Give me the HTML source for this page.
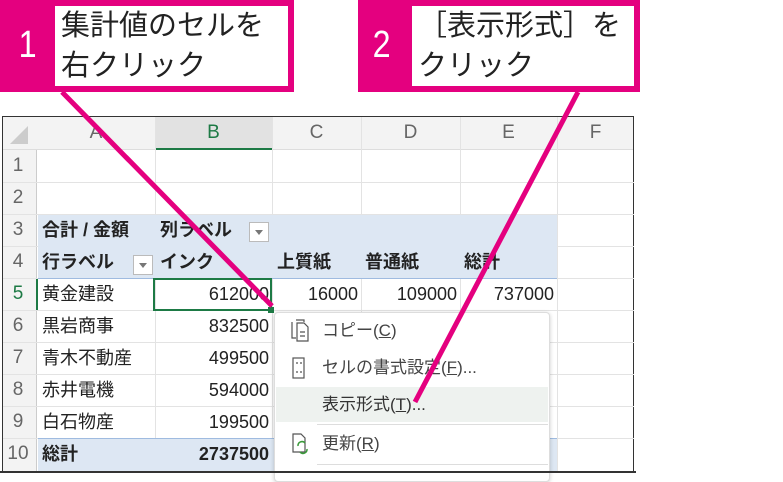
<!DOCTYPE html>
<html><head><meta charset="utf-8"><style>
*{margin:0;padding:0;box-sizing:border-box}
body{width:783px;height:473px;background:#fff;position:relative;overflow:hidden;font-family:"Liberation Sans","Noto Sans CJK JP",sans-serif;color:#222}
.a{position:absolute}
.call{background:#e4007f}
.in{background:#fff;font-size:29px;line-height:40px;padding:0 0 0 6px;color:#222;white-space:nowrap;overflow:hidden}
.num{color:#fff;font-size:38px;font-family:"Liberation Sans",sans-serif;transform:scaleX(.85)}
.t{position:absolute;font-size:18px;line-height:32px;white-space:nowrap}
.hd{color:#666;text-align:center;font-size:19px}
.r{text-align:right}
.b{font-weight:bold}
</style></head><body>
<!-- callouts -->
<div class="a call" style="left:0;top:0;width:294px;height:92px"></div>
<div class="a in" style="left:55px;top:6px;width:233px;height:80px">集計値のセルを<br>右クリック</div>
<div class="a num" style="left:17px;top:24px">1</div>
<div class="a call" style="left:358px;top:0;width:282px;height:92px"></div>
<div class="a in" style="left:412px;top:6px;width:222px;height:80px">［表示形式］を<br>クリック</div>
<div class="a num" style="left:371px;top:24px">2</div>

<!-- sheet frame -->
<div class="a" style="left:2px;top:116px;width:632px;height:357px;border:1px solid #333;border-bottom:none;background:#fff"></div>
<div class="a" style="left:3px;top:117px;width:630px;height:33px;background:#f3f3f3;border-bottom:1px solid #ddd"></div>
<div class="a" style="left:155px;top:117px;width:117px;height:33px;background:#e2e2e2;border-bottom:2px solid #1d7a45"></div>
<div class="a" style="left:3px;top:150px;width:34px;height:323px;background:#f3f3f3;border-right:1px solid #ccc"></div>
<svg class="a" style="left:0;top:0" width="783" height="473">
<polygon points="28,144 28,126 10,144" fill="#ccc"/>
<g stroke="#e3e3e3" stroke-width="1">
<line x1="155.5" y1="117" x2="155.5" y2="473"/><line x1="272.5" y1="117" x2="272.5" y2="473"/>
<line x1="361.5" y1="117" x2="361.5" y2="473"/><line x1="460.5" y1="117" x2="460.5" y2="473"/>
<line x1="557.5" y1="117" x2="557.5" y2="473"/>
<line x1="3" y1="182.5" x2="634" y2="182.5"/><line x1="3" y1="214.5" x2="634" y2="214.5"/>
<line x1="3" y1="246.5" x2="634" y2="246.5"/><line x1="3" y1="278.5" x2="634" y2="278.5"/>
<line x1="3" y1="310.5" x2="634" y2="310.5"/><line x1="3" y1="342.5" x2="634" y2="342.5"/>
<line x1="3" y1="374.5" x2="634" y2="374.5"/><line x1="3" y1="406.5" x2="634" y2="406.5"/>
<line x1="3" y1="438.5" x2="634" y2="438.5"/>
</g>
<rect x="38" y="215" width="519" height="63" fill="#dde7f3"/>
<line x1="38" y1="278.5" x2="557" y2="278.5" stroke="#9fbbe0"/>
<rect x="38" y="439" width="519" height="34" fill="#dde7f3"/>
<line x1="38" y1="438.5" x2="557" y2="438.5" stroke="#9fbbe0"/>
<rect x="249.5" y="222.5" width="19" height="19" fill="#fff" stroke="#bbb"/>
<polygon points="255,230 263,230 259,235" fill="#777"/>
<rect x="133.5" y="255.5" width="19" height="19" fill="#fff" stroke="#bbb"/>
<polygon points="139,263 147,263 143,268" fill="#777"/>
<rect x="154" y="279" width="117" height="31" fill="none" stroke="#1d7a45" stroke-width="2"/>
<line x1="37" y1="279" x2="37" y2="310" stroke="#1d7a45" stroke-width="2"/>
<rect x="268" y="307" width="6" height="6" fill="#1d7a45"/>
</svg>
<!-- col headers -->
<div class="t hd" style="left:37px;top:117px;width:118px">A</div>
<div class="t hd" style="left:155px;top:117px;width:117px;color:#1d7a45">B</div>
<div class="t hd" style="left:272px;top:117px;width:89px">C</div>
<div class="t hd" style="left:361px;top:117px;width:99px">D</div>
<div class="t hd" style="left:460px;top:117px;width:97px">E</div>
<div class="t hd" style="left:557px;top:117px;width:77px">F</div>
<!-- row numbers -->
<div class="t hd" style="left:3px;top:150px;width:30px">1</div>
<div class="t hd" style="left:3px;top:182px;width:30px">2</div>
<div class="t hd" style="left:3px;top:214px;width:30px">3</div>
<div class="t hd" style="left:3px;top:246px;width:30px">4</div>
<div class="t hd" style="left:3px;top:278px;width:30px;color:#1d7a45">5</div>
<div class="t hd" style="left:3px;top:310px;width:30px">6</div>
<div class="t hd" style="left:3px;top:342px;width:30px">7</div>
<div class="t hd" style="left:3px;top:374px;width:30px">8</div>
<div class="t hd" style="left:3px;top:406px;width:30px">9</div>
<div class="t hd" style="left:3px;top:438px;width:30px">10</div>
<!-- cells -->
<div class="t b" style="left:42px;top:214px">合計 / 金額</div>
<div class="t b" style="left:160px;top:214px">列ラベル</div>
<div class="t b" style="left:42px;top:246px">行ラベル</div>
<div class="t b" style="left:160px;top:246px">インク</div>
<div class="t b" style="left:277px;top:246px">上質紙</div>
<div class="t b" style="left:365px;top:246px">普通紙</div>
<div class="t b" style="left:464px;top:246px">総計</div>
<div class="t" style="left:42px;top:278px">黄金建設</div>
<div class="t" style="left:42px;top:310px">黒岩商事</div>
<div class="t" style="left:42px;top:342px">青木不動産</div>
<div class="t" style="left:42px;top:374px">赤井電機</div>
<div class="t" style="left:42px;top:406px">白石物産</div>
<div class="t b" style="left:42px;top:438px">総計</div>
<div class="t r" style="left:155px;top:278px;width:114px">612000</div>
<div class="t r" style="left:155px;top:310px;width:114px">832500</div>
<div class="t r" style="left:155px;top:342px;width:114px">499500</div>
<div class="t r" style="left:155px;top:374px;width:114px">594000</div>
<div class="t r" style="left:155px;top:406px;width:114px">199500</div>
<div class="t r b" style="left:155px;top:438px;width:114px">2737500</div>
<div class="t r" style="left:272px;top:278px;width:86px">16000</div>
<div class="t r" style="left:361px;top:278px;width:96px">109000</div>
<div class="t r" style="left:460px;top:278px;width:94px">737000</div>
<!-- context menu -->
<div class="a" style="left:274px;top:312px;width:276px;height:170px;background:#fff;border:1px solid #ddd;border-radius:4px;box-shadow:0 1px 4px rgba(0,0,0,.2)"></div>
<div class="a" style="left:276px;top:387px;width:272px;height:35px;background:#eef2ef"></div>
<div class="a" style="left:317px;top:424px;width:231px;height:1px;background:#ddd"></div>
<div class="a" style="left:317px;top:464px;width:231px;height:1px;background:#ddd"></div>
<svg class="a" style="left:0;top:0" width="783" height="473">
<g fill="none" stroke="#555" stroke-width="1.2">
<path d="M296 320h8v2M292 322v16h4"/><path d="M297 323h7l4 4v14h-11z"/><path d="M300 332h5M300 336h5"/>
<rect x="293" y="358" width="11" height="20"/><path d="M296 363h2M300 363h2M296 372h2M300 372h2"/>
<path d="M293 434v18h12v-14l-4-4z"/>
</g>
<path d="M298 446a4 4 0 0 1 7-3M307 449a4 4 0 0 1-7 3" fill="none" stroke="#3a9a3a" stroke-width="1.5"/>
</svg>
<div class="t" style="left:322px;top:315px;color:#444;font-size:17px">コピー(<u>C</u>)</div>
<div class="t" style="left:322px;top:352px;color:#444;font-size:17px">セルの書式設定(<u>F</u>)...</div>
<div class="t" style="left:322px;top:389px;color:#333;font-size:17px">表示形式(<u>T</u>)...</div>
<div class="t" style="left:322px;top:428px;color:#444;font-size:17px">更新(<u>R</u>)</div>
<div class="a" style="left:0;top:471px;width:636px;height:2px;background:#333"></div>
<!-- pointer lines -->
<svg class="a" style="left:0;top:0" width="783" height="473">
<g stroke="#e4007f" stroke-width="5" stroke-linecap="butt">
<line x1="62" y1="92" x2="272" y2="306"/>
<line x1="578" y1="92" x2="415" y2="402"/>
</g>
</svg>
</body></html>
